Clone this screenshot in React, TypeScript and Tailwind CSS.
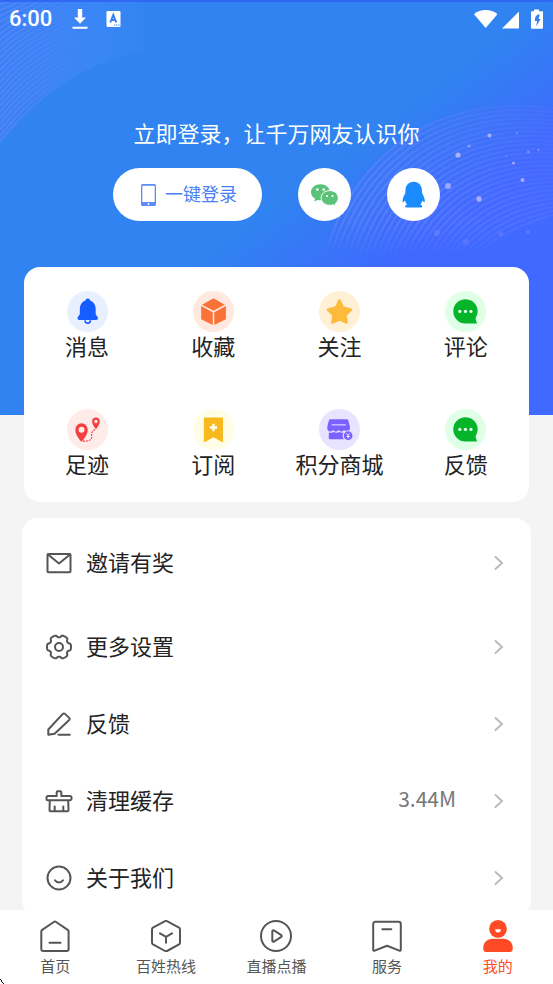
import type { ReactNode } from "react";

const INK = "#555555";

function lerp(a: number, b: number, t: number) {
  return Math.round((a + (b - a) * t) * 10) / 10;
}

function steps(n: number) {
  return Array.from({ length: n }, (_, i) => i / (n - 1));
}

const rightArcs = steps(27).map(
  (t) =>
    `M${lerp(326, 475, t)} ${lerp(252, 256, t)}C${lerp(350, 495, t)} ${lerp(170, 236, t)} ${lerp(420, 522, t)} ${lerp(92, 224, t)} 553 ${lerp(108, 215, t)}`,
);

const leftArcs = steps(24).map(
  (t) =>
    `M0 ${lerp(4, 142, t)}C${lerp(8, 40, t)} ${lerp(2, 90, t)} ${lerp(20, 100, t)} ${lerp(0, 52, t)} ${lerp(40, 165, t)} ${lerp(-16, 50, t)}`,
);

const sparks: Array<[number, number, number, number]> = [
  [458, 155, 2.6, 0.75],
  [469, 146, 1.6, 0.45],
  [489.5, 135.5, 2.1, 0.7],
  [517, 133, 1.2, 0.3],
  [513.5, 163, 1.5, 0.65],
  [528.5, 152, 1.4, 0.4],
  [538.5, 150, 1.2, 0.35],
  [506, 156, 1, 0.25],
  [522.5, 180, 1.9, 0.7],
  [448, 186, 3, 0.6],
  [479, 199, 2.7, 0.7],
  [437, 233, 3, 0.16],
  [466, 242, 3, 0.12],
  [501, 234, 2.6, 0.14],
  [528, 232, 2, 0.2],
];

function HeroBackdrop() {
  return (
    <svg
      className="absolute inset-x-0 top-0 h-[415px] w-full"
      viewBox="0 0 553 415"
      preserveAspectRatio="none"
      aria-hidden="true"
    >
      <defs>
        <linearGradient id="sky" gradientUnits="userSpaceOnUse" x1="197" y1="262" x2="269" y2="358">
          <stop offset="0" stopColor="#3083f0" />
          <stop offset="1" stopColor="#3f69ff" />
        </linearGradient>
        <linearGradient id="fadeRight" gradientUnits="userSpaceOnUse" x1="540" y1="90" x2="400" y2="200">
          <stop offset="0" stopColor="#7485ff" stopOpacity="0.08" />
          <stop offset="1" stopColor="#7a8bff" stopOpacity="0.42" />
        </linearGradient>
        <linearGradient id="fadeLeft" gradientUnits="userSpaceOnUse" x1="0" y1="0" x2="90" y2="0">
          <stop offset="0" stopColor="#5f8dff" stopOpacity="0.55" />
          <stop offset="1" stopColor="#5f8dff" stopOpacity="0" />
        </linearGradient>
        <linearGradient id="swell" gradientUnits="userSpaceOnUse" x1="0" y1="30" x2="165" y2="30">
          <stop offset="0" stopColor="#3f7cf6" stopOpacity="0.75" />
          <stop offset="0.55" stopColor="#4088fa" stopOpacity="0.65" />
          <stop offset="1" stopColor="#4088fa" stopOpacity="0" />
        </linearGradient>
        <linearGradient id="floor" x1="0" y1="0" x2="0" y2="1">
          <stop offset="0.8" stopColor="#fff" />
          <stop offset="1" stopColor="#000" />
        </linearGradient>
        <mask id="arcMask" maskUnits="userSpaceOnUse" x="300" y="80" width="253" height="178">
          <rect x="300" y="80" width="253" height="178" fill="url(#floor)" />
        </mask>
      </defs>
      <rect width="553" height="415" fill="url(#sky)" />
      <path d="M0 142C40 90 100 52 165 50C155 35 148 20 145 0H0z" fill="url(#swell)" />
      <g fill="none" stroke="url(#fadeLeft)" strokeWidth="2">
        {leftArcs.map((d) => (
          <path key={d} d={d} />
        ))}
      </g>
      <g mask="url(#arcMask)">
        <path
          d="M326 252C350 170 420 92 553 108V215C522 224 495 236 475 256z"
          fill="#5a6cff"
          fillOpacity="0.14"
        />
        <g fill="none" stroke="url(#fadeRight)" strokeWidth="2">
          {rightArcs.map((d) => (
            <path key={d} d={d} />
          ))}
        </g>
      </g>
      {sparks.map(([x, y, r, o]) => (
        <circle key={`${x}-${y}`} cx={x} cy={y} r={r} fill="#d6c4ff" fillOpacity={o} />
      ))}
      <rect width="553" height="2" fill="#3068f3" />
    </svg>
  );
}

function StatusBar() {
  return (
    <div className="flex h-[38px] items-center justify-between pr-[10px] pl-[9px] text-white">
      <div className="flex items-center">
        <span className="font-[Roboto,sans-serif] text-[22px] leading-7 font-medium">6:00</span>
        <svg className="ml-5 h-[22px] w-4" viewBox="0 0 16 22" fill="currentColor" aria-hidden="true">
          <path d="M5.800 1h4.400v8.500H14L8 15.800 2 9.500h3.800zM.5 18.700h15v2H.5z" />
        </svg>
        <svg className="ml-[18px] h-4 w-[15px]" viewBox="0 0 15 16" aria-hidden="true">
          <rect x="0.500" width="14" height="16" rx="1.200" fill="currentColor" />
          <path d="M4.300 11.500 7.300 3.800l3 7.700M5.400 9h3.800" fill="none" stroke="#3480f1" strokeWidth="1.900" />
          <path d="M8 14h1.300m.8 0h1.300m.8 0h1.300" stroke="#3480f1" strokeWidth="1.200" />
        </svg>
      </div>
      <svg className="h-[22px] w-[69px]" viewBox="0 0 69 22" fill="currentColor" aria-hidden="true">
        <path d="M0 6.200C3 3.300 7.300 2 11.700 2s8.700 1.300 11.700 4.200L11.700 20z" />
        <path d="M28 20.500 45 3.500v17z" />
        <path
          fillRule="evenodd"
          d="M60 1.500h5v1.700h3.200a.8.800 0 0 1 .8.800v16a.8.800 0 0 1-.8.800h-10.400a.8.800 0 0 1-.8-.8V4a.8.800 0 0 1 .8-.8H60zM63.500 6.500h2.200l-1.200 4.500h2l-4.200 7.500.8-5.500h-2.300l.5-4z"
        />
      </svg>
    </div>
  );
}

function PhoneIcon() {
  return (
    <svg className="h-[22px] w-[15px]" viewBox="0 0 15 22" aria-hidden="true">
      <path
        fillRule="evenodd"
        fill="#5a8bf7"
        d="M1.500 0h12A1.500 1.500 0 0 1 15 1.500v19a1.500 1.500 0 0 1-1.500 1.500h-12A1.500 1.500 0 0 1 0 20.500v-19A1.500 1.500 0 0 1 1.500 0zM1.300 1.700V18h12.400V1.700z"
      />
      <circle cx="7.500" cy="20" r="0.900" fill="#fff" />
    </svg>
  );
}

function WechatIcon() {
  return (
    <svg className="size-[53px]" viewBox="0 0 53 53" aria-hidden="true">
      <path
        fill="#5cc278"
        d="M22.400 16.200c5.300 0 9.500 3.500 9.500 8s-4.200 8.100-9.500 8.100c-1 0-2-.1-2.900-.4L16.300 33.600l.8-3C14.500 29.100 13 26.800 13 24.200c0-4.500 4.200-8 9.400-8z"
      />
      <path
        fill="#5cc278"
        stroke="#fff"
        strokeWidth="1"
        d="M31.700 22.600c4.800 0 8.600 3.300 8.600 7.400 0 2.300-1.200 4.200-3 5.600l.6 2.600-2.900-1.500c-1 .4-2.100.6-3.300.6-4.800 0-8.600-3.200-8.600-7.300s3.800-7.400 8.600-7.400z"
      />
      <g fill="#fff">
        <circle cx="19.300" cy="21.600" r="1.300" />
        <circle cx="25.700" cy="21.600" r="1.300" />
        <circle cx="29" cy="28" r="1.100" />
        <circle cx="34.500" cy="28" r="1.100" />
      </g>
    </svg>
  );
}

function QQIcon() {
  return (
    <svg className="size-[53px]" viewBox="0 0 53 53" aria-hidden="true">
      <path
        fill="#1a8cff"
        d="M26.700 13.700c5.200 0 8 3.700 8.200 8.300l.2 3.200c1.600 2.600 2.700 5.400 2.700 7.800 0 1.600-.7 1.800-2.400-.5-.5 1.800-1.200 3.300-2.300 4.300 1.300.3 2.200.7 2.200 1.400 0 1-.9 1.400-2.500 1.400H20.600c-1.600 0-2.500-.4-2.500-1.400 0-.7.9-1.100 2.200-1.400-1.100-1-1.800-2.500-2.300-4.300-1.700 2.300-2.400 2.100-2.400.5 0-2.400 1.100-5.200 2.700-7.800l.2-3.200c.2-4.600 3-8.300 8.200-8.300z"
      />
    </svg>
  );
}

const bell = (
  <>
    <path
      fill="#165dff"
      d="M21 7.700a2.600 2.600 0 0 1 2.500 1.900C27 11 29 14 29 18v4.500c0 1.500.8 2.200 1.700 3.200 1.200 1.400.6 3.600-1.200 3.600h-17c-1.800 0-2.400-2.200-1.200-3.600.9-1 1.700-1.700 1.700-3.200V18c0-4 2-7 5.500-8.400A2.600 2.600 0 0 1 21 7.700z"
    />
    <path d="M18.300 29.500a2.700 3 0 0 0 5.400 0" fill="none" stroke="#165dff" strokeWidth="1.600" />
  </>
);

const cube = (
  <path
    fill="#f97339"
    d="M20.700 7.300 32.200 13.800 20.700 20 9.200 13.800zM8.300 15.300 20 21.500v12.800L8.300 28.500zM33.300 15.300 21.500 21.500v12.800l11.800-5.800z"
  />
);

const star = (
  <path
    fill="#fdba3b"
    stroke="#fdba3b"
    strokeWidth="2.400"
    strokeLinejoin="round"
    d="M20.700 9.500 24.200 16.600 32.400 18.800 26.900 24.600 27.900 32 20.700 28.800 13.500 32 14.500 24.600 9 18.800 17.200 16.600z"
  />
);

const comment = (
  <>
    <path fill="#04b52a" d="M20.700 8.300a12.300 12.300 0 0 1 10.600 18.600c-.6 1-.4 1.600.1 2.700l1 3.300H20.700a12.300 12.300 0 0 1 0-24.600z" />
    <g fill="#e9ffee">
      <circle cx="15" cy="20.700" r="1.600" />
      <circle cx="20.700" cy="20.700" r="1.600" />
      <circle cx="26.300" cy="20.700" r="1.600" />
    </g>
  </>
);

const track = (
  <>
    <path
      fill="#f53f3f"
      fillRule="evenodd"
      d="M14.700 14.500a6.300 6.300 0 0 1 6.300 6.400c0 4.200-3 8.600-6.300 12.200-3.300-3.600-6.300-8-6.300-12.200a6.300 6.300 0 0 1 6.300-6.400zm0 3.500a3 3 0 1 0 0 6 3 3 0 0 0 0-6zM29.300 8.500a3.900 3.900 0 0 1 3.900 4c0 2.800-1.800 5.500-3.900 7.900-2.100-2.400-3.900-5.100-3.900-7.900a3.900 3.900 0 0 1 3.900-4zm0 2.400a1.700 1.700 0 1 0 0 3.400 1.700 1.700 0 0 0 0-3.400z"
    />
    <path
      d="M16 32.500c5 .3 9-.5 9-4.500 0-2.500-1-5 4-7.500"
      fill="none"
      stroke="#f53f3f"
      strokeWidth="1.100"
      strokeDasharray="2 1"
    />
  </>
);

const bookmark = (
  <>
    <path fill="#f7ba1e" d="M12 8.700h17.700a.7.700 0 0 1 .7.700v23.400c0 .6-.5.800-1 .5l-8.700-4.600-8.700 4.600c-.5.300-1 .1-1-.5V9.400a.7.700 0 0 1 1-.7z" />
    <path d="M20.700 15v7.400M17 18.700h7.400" stroke="#fffef0" strokeWidth="2.400" />
  </>
);

const shop = (
  <>
    <path
      fill="#7b61ff"
      d="M12.800 10.300h15a2 2 0 0 1 1.900 1.300l1.600 6v2.100c0 2-1.500 3-3 3s-2.500-.8-2.900-1.500c-.6.900-1.600 1.500-2.800 1.500s-2.200-.6-2.800-1.500c-.6.900-1.600 1.500-2.800 1.500s-2.200-.6-2.700-1.500c-.6.900-1.600 1.500-2.900 1.500-1.500 0-3-1-3-3v-2.100l1.600-6a2 2 0 0 1 1.800-1.300z"
    />
    <path d="M12.800 16h14.400" stroke="#d5ccff" strokeWidth="1.300" />
    <path
      fill="#7b61ff"
      d="M9.900 23.700c2 .7 3.700.5 5.200-.4 1.800 1 4 1 5.600 0 1.700.9 3.500 1 5.300.2V30.700H11a1.100 1.100 0 0 1-1.100-1.100z"
    />
    <circle cx="29.500" cy="27" r="5" fill="#7b61ff" stroke="#e8e3ff" strokeWidth="1.200" />
    <path d="M27.800 24.700l1.700 2 1.700-2M29.500 26.700v3M27.900 27.800h3.200" fill="none" stroke="#fff" strokeWidth="0.900" />
  </>
);

type Shortcut = { label: string; tint: string; icon: ReactNode };

const shortcuts: Shortcut[] = [
  { label: "消息", tint: "bg-[#e8efff]", icon: bell },
  { label: "收藏", tint: "bg-[#ffe8de]", icon: cube },
  { label: "关注", tint: "bg-[#fff0d6]", icon: star },
  { label: "评论", tint: "bg-[#dfffe6]", icon: comment },
  { label: "足迹", tint: "bg-[#ffebe8]", icon: track },
  { label: "订阅", tint: "bg-[#fffde6]", icon: bookmark },
  { label: "积分商城", tint: "bg-[#e8e3ff]", icon: shop },
  { label: "反馈", tint: "bg-[#dfffe6]", icon: comment },
];

// six-lobed outline centred in a 28px box
const gearOutline =
  Array.from({ length: 120 }, (_, i) => {
    const a = (i / 120) * Math.PI * 2;
    const wave = Math.tanh(2.6 * Math.cos(6 * a) + 1.1);
    const r = 10.8 + 1.2 * wave;
    return `${i === 0 ? "M" : "L"}${(14 + r * Math.cos(a)).toFixed(2)} ${(14 + r * Math.sin(a)).toFixed(2)}`;
  }).join("") + "z";

type MenuRow = { label: string; value?: string; height: string; icon: ReactNode };

const menuRows: MenuRow[] = [
  {
    label: "邀请有奖",
    height: "h-[90px]",
    icon: (
      <>
        <rect x="2.500" y="5" width="23" height="18.200" rx="1" />
        <path d="M3 5.500 14 14.500 25 5.500" />
      </>
    ),
  },
  {
    label: "更多设置",
    height: "h-[77px]",
    icon: (
      <>
        <path d={gearOutline} />
        <circle cx="14" cy="14" r="4" />
      </>
    ),
  },
  {
    label: "反馈",
    height: "h-[77px]",
    icon: (
      <path d="M3.300 24.700v-5.200L17.800 3.900a1.500 1.500 0 0 1 2.200 0l4.200 4a1.500 1.500 0 0 1 0 2.200L9.600 23.800zM13.500 24.700h11.300" />
    ),
  },
  {
    label: "清理缓存",
    value: "3.44M",
    height: "h-[77px]",
    icon: (
      <path d="M11.700 9V5.200a1 1 0 0 1 1-1h2.600a1 1 0 0 1 1 1V9H25a1.500 1.500 0 0 1 1.500 1.500v1.300a1.500 1.500 0 0 1-1.500 1.500H3a1.500 1.500 0 0 1-1.500-1.500v-1.300A1.500 1.500 0 0 1 3 9zM4.800 13.500 4.500 23.200a1 1 0 0 0 1 1h17a1 1 0 0 0 1-1L23.200 13.500M9.700 24v-4.500M18.300 24v-4.500" />
    ),
  },
  {
    label: "关于我们",
    height: "h-[77px]",
    icon: (
      <>
        <circle cx="14" cy="14" r="11.500" />
        <path d="M10 16.300c1 1.500 2.400 2.200 4 2.200s3-.7 4-2.200" />
      </>
    ),
  },
];

type Tab = { label: string; active?: boolean; icon: ReactNode };

const tabs: Tab[] = [
  {
    label: "首页",
    icon: <path d="M3.200 9.800 14.800 2a2 2 0 0 1 2.300 0L28.700 9.800a2 2 0 0 1 .9 1.700V29a2 2 0 0 1-2 2H4.300a2 2 0 0 1-2-2V11.500a2 2 0 0 1 .9-1.700zM10.500 22.700h11" />,
  },
  {
    label: "百姓热线",
    icon: (
      <path d="M15 1.200a2 2 0 0 1 2 0L29 7.700a2 2 0 0 1 1 1.700V22.700a2 2 0 0 1-1 1.700L17 31a2 2 0 0 1-2 0L3 24.400a2 2 0 0 1-1-1.700V9.400a2 2 0 0 1 1-1.700zM10 13.300 16 16.800 22 13.300M16 16.800v6" />
    ),
  },
  {
    label: "直播点播",
    icon: (
      <>
        <circle cx="16" cy="16" r="15" />
        <path d="M12.300 11.200v9.600a1 1 0 0 0 1.600.8l7.400-4.800a1 1 0 0 0 0-1.600l-7.400-4.800a1 1 0 0 0-1.600.8z" />
      </>
    ),
  },
  {
    label: "服务",
    icon: (
      <path d="M4.500 1.700h23a2.300 2.300 0 0 1 2.300 2.300v25.700a1 1 0 0 1-1.500.9L16 25.700 3.700 30.600a1 1 0 0 1-1.500-.9V4a2.300 2.300 0 0 1 2.300-2.300zM11.300 9.300h9" />
    ),
  },
  {
    label: "我的",
    active: true,
    icon: (
      <g fill="#ff4a26" stroke="none">
        <circle cx="16" cy="8.900" r="8.900" />
        <path d="M10.500 18.800h11c5 0 9.200 3.700 9.200 8.500v1.700a3 3 0 0 1-3 3H4.300a3 3 0 0 1-3-3v-1.700c0-4.800 4.200-8.500 9.200-8.500z" />
        <path d="M13.200 9.200h5.600a2.800 3.200 0 0 1-5.600 0z" fill="#fff" />
      </g>
    ),
  },
];

function LoginPanel() {
  return (
    <section className="flex flex-col items-center pt-[78px]">
      <h1 className="text-[22px] leading-8 text-white">立即登录，让千万网友认识你</h1>
      <div className="mt-5 flex gap-9">
        <button
          type="button"
          className="flex h-[53px] w-[149px] items-center gap-[9px] rounded-full bg-white pl-7 text-lg text-[#4a80f5]"
        >
          <PhoneIcon />
          <span className="pb-[3px]">一键登录</span>
        </button>
        <button type="button" aria-label="微信登录" className="size-[53px] rounded-full bg-white">
          <WechatIcon />
        </button>
        <button type="button" aria-label="QQ登录" className="size-[53px] rounded-full bg-white">
          <QQIcon />
        </button>
      </div>
    </section>
  );
}

function ShortcutGrid() {
  return (
    <section className="mx-6 mt-[46px] grid grid-cols-4 gap-y-[50px] rounded-2xl bg-white pt-6 pb-[25px]">
      {shortcuts.map((item) => (
        <button key={item.label} type="button" className="flex flex-col items-center">
          <span className={`size-[41px] rounded-full ${item.tint}`}>
            <svg className="size-[41px]" viewBox="0 0 41.500 41.500" aria-hidden="true">
              {item.icon}
            </svg>
          </span>
          <span className="text-[22px] leading-[27px] whitespace-nowrap">{item.label}</span>
        </button>
      ))}
    </section>
  );
}

function MenuList() {
  return (
    <section className="mx-[22px] mt-4 rounded-2xl bg-white">
      {menuRows.map((row) => (
        <button
          key={row.label}
          type="button"
          className={`flex w-full items-center pr-6 pl-[23px] ${row.height}`}
        >
          <svg
            className="size-7"
            viewBox="0 0 28 28"
            fill="none"
            stroke={INK}
            strokeWidth="2"
            strokeLinejoin="round"
            strokeLinecap="round"
            aria-hidden="true"
          >
            {row.icon}
          </svg>
          <span className="ml-[13px] pb-[3px] text-[22px]">{row.label}</span>
          <span className="mr-[35px] ml-auto pb-[3px] text-[21px] text-[#777777]">{row.value}</span>
          <svg className="size-4" viewBox="0 0 16 16" fill="none" stroke="#bbbbbb" strokeWidth="2" strokeLinecap="round" aria-hidden="true">
            <path d="M4.500 2 11 8l-6.500 6" />
          </svg>
        </button>
      ))}
    </section>
  );
}

function TabBar() {
  return (
    <nav className="relative grid h-[74px] shrink-0 grid-cols-5 bg-white">
      {tabs.map((tab) => (
        <a
          key={tab.label}
          href="#"
          aria-current={tab.active ? "page" : undefined}
          className={`flex flex-col items-center pt-[10px] text-[15px] leading-7 ${tab.active ? "text-[#ff4a26]" : "text-[#555555]"}`}
        >
          <svg
            className="size-8 shrink-0"
            viewBox="0 0 32 32"
            fill="none"
            stroke={INK}
            strokeWidth="2"
            strokeLinejoin="round"
            strokeLinecap="round"
            aria-hidden="true"
          >
            {tab.icon}
          </svg>
          {tab.label}
        </a>
      ))}
      <svg className="absolute bottom-0 left-0 h-[5px] w-1" viewBox="0 0 4 5" fill="#111" aria-hidden="true">
        <path d="M0 0h1v1H0zM1 1h1v2H1zM2 3h1v1H2zM3 4h1v1H3z" />
      </svg>
    </nav>
  );
}

export default function App() {
  return (
    <div className="flex h-screen flex-col bg-[#f4f4f4] font-['Noto_Sans_CJK_SC',sans-serif] text-[#222222]">
      <main className="min-h-0 flex-1 overflow-y-auto [scrollbar-width:none]">
        <div className="relative">
          <HeroBackdrop />
          <div className="relative">
            <StatusBar />
            <LoginPanel />
            <ShortcutGrid />
            <MenuList />
          </div>
        </div>
      </main>
      <TabBar />
    </div>
  );
}
